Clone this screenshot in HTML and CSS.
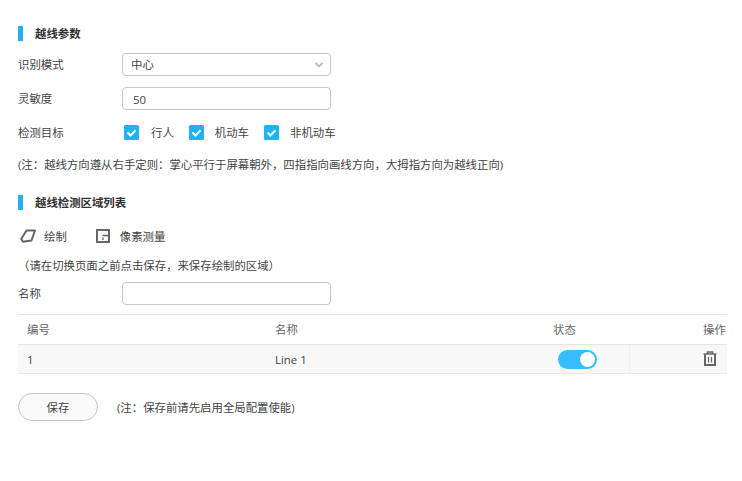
FILE: index.html
```html
<!DOCTYPE html>
<html>

<head>
  <meta charset="UTF-8">
  <title>越线参数</title>
  <link rel="stylesheet" href="styles.css">
</head>

<body>
  <div class="title first">越线参数</div>

  <div class="row">
    <label class="name">识别模式</label>
    <div class="field select">
      <span>中心</span>
      <svg class="arrow" width="8" height="6" viewBox="0 0 8 6">
        <path d="M0.5 1 L4 4.5 L7.5 1" fill="none" stroke="#bbb" stroke-width="1.8" />
      </svg>
    </div>
  </div>

  <div class="row sens">
    <label class="name">灵敏度</label>
    <div class="field value">50</div>
  </div>

  <div class="row targets">
    <label class="name">检测目标</label>
    <span class="check">
      <svg width="15" height="15" viewBox="0 0 15 15">
        <rect width="15" height="15" rx="1.5" fill="#1cb4f7" />
        <path d="M3.5 7.5 L6.5 10.5 L11.5 5.2" fill="none" stroke="#fff" stroke-width="2" />
      </svg>
      <span class="one">行人</span>
    </span>
    <span class="check">
      <svg width="15" height="15" viewBox="0 0 15 15">
        <rect width="15" height="15" rx="1.5" fill="#1cb4f7" />
        <path d="M3.5 7.5 L6.5 10.5 L11.5 5.2" fill="none" stroke="#fff" stroke-width="2" />
      </svg>
      <span class="two">机动车</span>
    </span>
    <span class="check">
      <svg width="15" height="15" viewBox="0 0 15 15">
        <rect width="15" height="15" rx="1.5" fill="#1cb4f7" />
        <path d="M3.5 7.5 L6.5 10.5 L11.5 5.2" fill="none" stroke="#fff" stroke-width="2" />
      </svg>
      <span class="three">非机动车</span>
    </span>
  </div>

  <p class="note">(注：越线方向遵从右手定则：掌心平行于屏幕朝外，四指指向画线方向，大拇指方向为越线正向)</p>

  <div class="title second">越线检测区域列表</div>

  <div class="tools">
    <span class="tool draw">
      <svg width="16" height="14" viewBox="0 0 16 14">
        <path d="M1.2 10 L6.5 1.5 H15 L11.5 11.5 L3 12.8 Z" fill="none" stroke="#666" stroke-width="2" stroke-linejoin="round" />
      </svg>
      绘制
    </span>
    <span class="tool measure">
      <svg width="14" height="14" viewBox="0 0 14 14">
        <path d="M1 1 H13 V13 H1 Z" fill="none" stroke="#666" stroke-width="2" />
        <path d="M6.5 6.5 H13 M7 8.5 V11" fill="none" stroke="#666" stroke-width="1.3" />
      </svg>
      像素测量
    </span>
  </div>

  <p class="hint">（请在切换页面之前点击保存，来保存绘制的区域）</p>

  <div class="row name-row">
    <label class="name">名称</label>
    <div class="field"></div>
  </div>

  <table>
    <thead>
      <tr>
        <th class="col-id">编号</th>
        <th class="col-name">名称</th>
        <th class="col-state">状态</th>
        <th class="col-op">操作</th>
      </tr>
    </thead>
    <tbody>
      <tr>
        <td>1</td>
        <td>Line 1</td>
        <td class="state-cell"><span class="switch"><span class="knob"></span></span></td>
        <td class="op-cell">
          <svg width="14" height="15" viewBox="0 0 14 15">
            <path d="M0.5 3 H13.5 M4.5 3 V1 H9.5 V3" fill="none" stroke="#666" stroke-width="1.6" />
            <path d="M2 3.5 V14 H12 V3.5" fill="none" stroke="#666" stroke-width="2" />
            <path d="M5.5 6 V11.5 M8.5 6 V11.5" fill="none" stroke="#666" stroke-width="1.2" />
          </svg>
        </td>
      </tr>
    </tbody>
  </table>

  <div class="actions">
    <button class="save">保存</button>
    <span class="save-note">(注：保存前请先启用全局配置使能)</span>
  </div>
</body>

</html>
```

FILE: styles.css
```css
* {
  box-sizing: border-box;
}

body {
  margin: 0;
  padding: 26px 15px 0 18px;
  font-family: "Open Sans", "Noto Sans CJK SC", sans-serif;
  font-size: 11.4px;
  line-height: 15px;
  color: #444;
  background: #fff;
  text-spacing-trim: space-all;
}

.title {
  height: 15px;
  border-left: 5px solid #1cb4f7;
  padding-left: 12px;
  font-weight: bold;
  color: #333;
}

.second {
  margin-top: 23px;
}

.row {
  display: flex;
  align-items: center;
  margin-top: 12px;
}

.sens {
  margin-top: 11px;
}

.name-row {
  margin-top: 9px;
}

.name {
  width: 104px;
  flex-shrink: 0;
}

.field {
  width: 209px;
  height: 23px;
  border: 1px solid #c4c7cc;
  border-radius: 4px;
  background: #fff;
}

.select {
  display: flex;
  align-items: center;
  justify-content: space-between;
  padding: 0 7px 0 8px;
}

.value {
  padding: 4px 10px;
}

.targets {
  margin-top: 12px;
  height: 20px;
}

.check {
  display: flex;
  align-items: center;
}

.check svg {
  margin-left: 2px;
}

.one {
  margin: 0 13px 0 12px;
}

.two {
  margin: 0 13px 0 11px;
}

.three {
  margin-left: 11px;
}

.note {
  margin: 15px 0 0;
}

.tools {
  display: flex;
  align-items: center;
  margin-top: 17px;
  height: 18px;
}

.tool {
  display: flex;
  align-items: center;
}

.draw {
  margin-left: 2px;
}

.draw svg {
  margin-right: 8px;
}

.measure {
  margin-left: 29px;
}

.measure svg {
  margin-right: 10px;
}

.hint {
  margin: 13px 0 0;
}

table {
  width: 709px;
  margin-top: 9px;
  border-collapse: collapse;
  table-layout: fixed;
}

th,
td {
  height: 30px;
  padding: 0 0 0 9px;
  font-weight: normal;
  text-align: left;
}

th {
  border-top: 1px solid #e2e4e6;
  border-bottom: 1px solid #e2e4e6;
  color: #666;
}

td {
  height: 29px;
  background: #f8f8f8;
  border-bottom: 1px solid #e8e9ea;
}

.col-id {
  width: 248px;
}

.col-name {
  width: 279px;
}

.col-state {
  width: 84px;
}

th.col-state {
  padding-left: 8px;
}

th.col-op {
  padding-left: 74px;
}

.state-cell {
  padding-left: 13px;
  border-right: 1px solid #f0f0f0;
}

.op-cell {
  padding-left: 73px;
}

.op-cell svg {
  display: block;
  margin-bottom: 2px;
}

.switch {
  display: block;
  width: 39px;
  height: 19px;
  border-radius: 10px;
  background: #38bdfc;
  position: relative;
}

.knob {
  position: absolute;
  right: 2px;
  top: 2px;
  width: 15px;
  height: 15px;
  border-radius: 50%;
  background: #fff;
}

.actions {
  display: flex;
  align-items: center;
  margin-top: 19px;
}

.save {
  width: 80px;
  height: 28px;
  border: 1px solid #c4c7cc;
  border-radius: 14px;
  background: #fafafa;
  font: inherit;
  color: #444;
}

.save-note {
  margin-left: 19px;
}
```
